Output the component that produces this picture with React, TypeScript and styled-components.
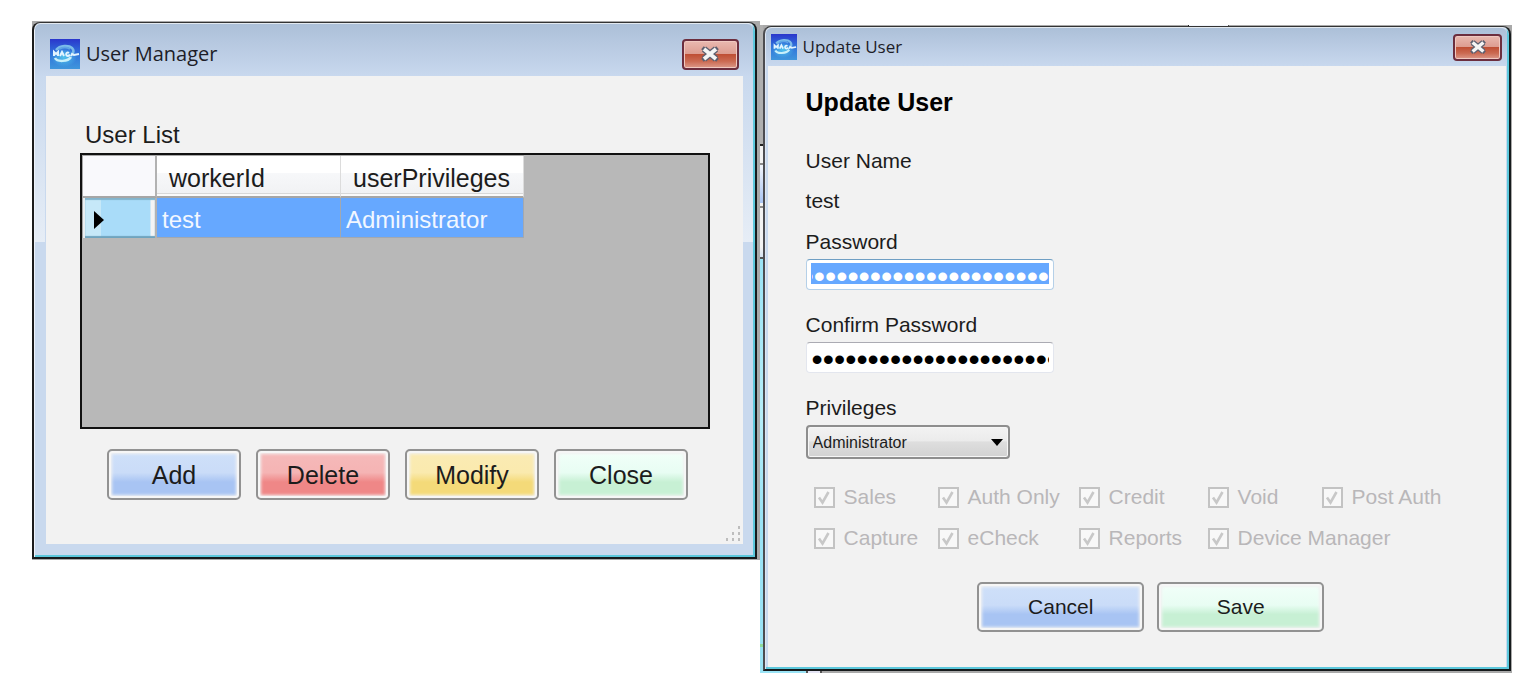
import React, { useEffect, useRef, useState } from 'react';
import styled, { createGlobalStyle, css } from 'styled-components';

const GlobalStyle = createGlobalStyle`
  *, *::before, *::after { box-sizing: border-box; }
  body { margin: 0; background: #fff; color: #1c1c1c; font-family: "Liberation Sans", Arial, sans-serif; }
  button, input, select { font-family: inherit; color: inherit; }
`;

const Desktop = styled.main`
  display: flex;
  align-items: flex-start;
  padding: 21px 24px 19px 32px;
`;

const ManagerBackdrop = styled.div`
  flex: 728 1 0;
  min-width: 0;
  padding: 1px 3px 1px 0;
  background: #a9a9a9;
`;

const EditorBackdrop = styled.div`
  flex: 752 1 0;
  min-width: 0;
  margin-top: 4px;
  padding: 1px 1px 2px 3px;
  background:
    linear-gradient(90deg, #222 1px, #f2f6fc 1px 40px, #555 40px) 428px 0 / 41px 1px no-repeat,
    linear-gradient(90deg, #9ae3f5 46px, #555 46px 48px, #e4e4f4 48px 60px, #555 60px) 0 100% / 62px 2px no-repeat,
    linear-gradient(
      #b0b0b0 119px, #222 119px 121px, #f2f2f2 121px 138px, #8a8a8a 138px 140px,
      #eef2fa 140px 142px, #a9c4f2 178px, #f2f2f2 178px 181px, #8a8a8a 181px 183px,
      #f2f2f2 183px 222px, #d5e2f0 232px, #555 232px 234px, #9ae3f5 234px, #b5edf8 390px,
      #9ae3f5 490px, #9ae3f5 619px, #8fdc9c 619px 622px, #9ae3f5 622px
    ) 0 0 / 3px 100% no-repeat,
    #a9a9a9;
`;

const Frame = styled.section<{ $wide?: boolean }>`
  display: flex;
  flex-direction: column;
  border: 2px solid #161a1c;
  border-top: 1px solid #333;
  border-left-color: ${p => (p.$wide ? '#1c1c1c' : '#4c4c50')};
  border-radius: 8px 8px 0 0;
  background: #c9d9ee;
  box-shadow:
    inset 0 1px 0 #e2e9f0,
    inset 1px 0 0 ${p => (p.$wide ? '#eef3fa' : '#dde6f4')},
    inset -2px -2px 0 #5cc8dc;
`;

const TitleBar = styled.header<{ $wide?: boolean }>`
  display: flex;
  align-items: center;
  gap: 6px;
  height: ${p => (p.$wide ? 52 : 38)}px;
  margin: 1px 2px 0 1px;
  padding: ${p => (p.$wide ? '8px 14px 0 15px' : '0 5px 0 5px')};
  border-radius: 6px 6px 0 0;
  background: linear-gradient(#acc0d8, #b6c8e0 35%, #c8d8ee);
`;

const TitleText = styled.h1<{ $wide?: boolean }>`
  flex: 1;
  margin: 0;
  font: 400 ${p => (p.$wide ? 20 : 17)}px/24px "Open Sans", "Noto Sans", sans-serif;
  color: #1d1d28;
`;

const CloseButton = styled.button<{ $wide?: boolean }>`
  display: flex;
  align-items: center;
  justify-content: center;
  width: ${p => (p.$wide ? 57 : 49)}px;
  height: ${p => (p.$wide ? 31 : 27)}px;
  padding: 0;
  border: 2px solid #6c2e3e;
  border-radius: 4px;
  background: linear-gradient(#e9b9b0, #dd9c90 48%, #bf4f35 50%, #cb6a52 75%, #dc998a);
  box-shadow: inset 0 0 0 1px #f0c8c0;
`;

const Client = styled.div`
  background: #f2f2f2;
`;

const ManagerSides = styled.div`
  padding: 0 12px 13px;
  background:
    linear-gradient(#c9d9ee, #e6edf6) 1px 0 / 10px 166px no-repeat,
    linear-gradient(#c9d9ee, #e6edf6) calc(100% - 2px) 0 / 10px 166px no-repeat;
`;

const EditorSides = styled.div`
  padding: 0 3px 2px;
`;

const GridLabel = styled.h2`
  margin: 0;
  padding: 45px 39px 4px;
  font-size: 24px;
  font-weight: 400;
  line-height: 28px;
`;

const DataGrid = styled.div`
  height: 276px;
  margin: 0 33px 0 34px;
  border: 2px solid #111;
  background: #b8b8b8;
  overflow: hidden;
`;

const Table = styled.table`
  table-layout: fixed;
  width: 442px;
  border-collapse: separate;
  border-spacing: 0;
  border-left: 1px solid #a8a8a8;
  border-top: 1px solid #a8a8a8;
  font-size: 24px;
  line-height: 28px;
  text-align: left;
`;

const HeadCell = styled.th`
  height: 42px;
  padding: 4px 0 0 12px;
  border-right: 1px solid #dcdcdc;
  border-bottom: 2px solid #a6a6a6;
  background: linear-gradient(#fff 42%, #f7f8fa 43%, #f1f2f4 92%, #d8d8d8 93% 95%, #fafafa 96%);
  font-size: 25px;
  font-weight: 400;
`;

const CornerCell = styled.td`
  border-right: 2px solid #b2b2b2;
  border-bottom: 2px solid #a6a6a6;
  background: #f9f9fc;
`;

const RowHeader = styled.td`
  height: 40px;
  padding: 4px 0 0 9px;
  border-right: 2px solid #b2b2b2;
  border-left: 2px solid #e8eef2;
  background: linear-gradient(90deg, #c6e8f8 16px, #a9dcf9 16px 65px, #f4f4f4 66px);
  box-shadow: inset 0 2px 1px #82b4cc, inset 0 -2px 1px #6fa4be;
  svg { display: block; }
`;

const DataCell = styled.td`
  padding: 4px 0 0 5px;
  border-right: 1px solid #a2a8b0;
  border-bottom: 1px solid #a2a8b0;
  background: #66a8ff;
  color: #f2f7ff;
`;

const tones = {
  blue: ['#cfe0f9', '#cadcf8', '#a8c4f3'],
  red: ['#f5baba', '#f5b4b4', '#ef8787'],
  yellow: ['#faebb4', '#faeaae', '#f4da79'],
  green: ['#f2fff9', '#e8fdf3', '#c7f0d4'],
};

const ActionButton = styled.button<{ $tone: keyof typeof tones; $large?: boolean }>`
  width: ${p => (p.$large ? 134 : 167)}px;
  height: ${p => (p.$large ? 51 : 50)}px;
  padding: 0;
  border: 2px solid #929292;
  border-radius: 5px;
  font-size: ${p => (p.$large ? 25 : 21)}px;
  line-height: 28px;
  box-shadow: inset 0 0 0 2px #f6f6f6, inset 0 0 3px 3px #f2f2f2;
  ${p => {
    const [top, mid, low] = tones[p.$tone];
    return css`background: linear-gradient(${top}, ${mid} 46%, ${low} 66%, ${low});`;
  }}
`;

const ManagerActions = styled.div`
  display: flex;
  gap: 15px;
  padding: 20px 0 0 61px;
`;

const GripRow = styled.div`
  display: flex;
  justify-content: flex-end;
  padding: 26px 2px 3px;
  svg { display: block; }
`;

const Form = styled.form`
  padding: 22px 38px 35px;
  font-size: 21px;
  line-height: 24px;
`;

const FormTitle = styled.h2`
  margin: 0 0 33px;
  font-size: 25px;
  line-height: 28px;
  color: #000;
`;

const UserName = styled.dl`
  display: grid;
  gap: 16px;
  margin: 0 0 17px;
  dd { margin: 0; }
`;

const Fields = styled.div`
  display: grid;
  justify-items: start;
  gap: 23px;
`;

const Field = styled.div`
  display: grid;
  justify-items: start;
  gap: 5px;
`;

const PasswordBox = styled.input<{ $selected?: boolean }>`
  width: 248px;
  height: 31px;
  padding: 6px 4px 2px 5px;
  border: 1px solid ${p => (p.$selected ? '#b5d0e8' : '#e3e6ee')};
  border-top-color: ${p => (p.$selected ? '#6f9fc4' : '#ababb3')};
  border-radius: 4px;
  outline: none;
  font-size: 32px;
  line-height: 21px;
  color: ${p => (p.$selected ? '#fff' : '#000')};
  background: ${p =>
    p.$selected
      ? 'linear-gradient(#66a8ff, #66a8ff) 4px 3px / calc(100% - 8px) 21px no-repeat, #fff'
      : '#fff'};
`;

const SelectWrap = styled.div`
  display: grid;
  align-items: center;
  > * { grid-area: 1 / 1; }
  svg { justify-self: end; margin-right: 7px; pointer-events: none; }
`;

const Select = styled.select`
  appearance: none;
  width: 204px;
  height: 34px;
  padding: 0 24px 0 5px;
  border: 2px solid #8e8e8e;
  border-radius: 4px;
  background: linear-gradient(#f2f2f2, #ebebeb 46%, #dedede 50%, #d2d2d2);
  box-shadow: inset 0 0 0 1px #f6f6f6;
  font-size: 16px;
`;

const Permissions = styled.fieldset`
  display: grid;
  grid-template-columns: 124px 141px 129px 114px auto;
  row-gap: 17px;
  margin: 26px 0 0;
  padding: 0 0 0 8px;
  border: 0;
  min-width: 0;
`;

const Permission = styled.label<{ $span?: number }>`
  grid-column: span ${p => p.$span ?? 1};
  display: flex;
  align-items: center;
  gap: 9px;
  color: #b9b7b9;
  white-space: nowrap;
`;

const TickBox = styled.span`
  display: grid;
  place-items: center;
  > * { grid-area: 1 / 1; }
  input {
    appearance: none;
    width: 21px;
    height: 21px;
    margin: 0;
    border: 2px solid #c3c3c3;
    background: #f8f8f8;
  }
`;

const FormActions = styled.div`
  display: flex;
  justify-content: center;
  gap: 13px;
  margin-top: 32px;
  padding-left: 28px;
`;

function AppIcon({ size }: { size: number }) {
  return (
    <svg width={size} height={size} viewBox="0 0 30 30" aria-hidden="true">
      <defs>
        <linearGradient id="tile" x1="0" y1="0" x2="0" y2="1">
          <stop offset="0" stopColor="#2a36cc" />
          <stop offset="0.45" stopColor="#2f70da" />
          <stop offset="1" stopColor="#3f96dc" />
        </linearGradient>
        <radialGradient id="glow">
          <stop offset="0" stopColor="#50c4ec" />
          <stop offset="1" stopColor="#50c4ec" stopOpacity="0" />
        </radialGradient>
      </defs>
      <rect width="30" height="30" fill="url(#tile)" />
      <ellipse cx="14" cy="18" rx="13" ry="10" fill="url(#glow)" />
      <path d="M6 11C10 6 19 6 22 9c2 2 2 4 0 6" fill="none" stroke="#7cbcea" strokeWidth="2.500" />
      <path d="M9 10c4-2 8-2 11 0" fill="none" stroke="#5fa6e6" strokeWidth="2" />
      <path d="M4 17v-4l2 2 2-2v4m2 0 2-4 2 4m5-3c-3-2-4 3-1 3l2-1m1 1 1-2 2 1 5-1" fill="none" stroke="#e2f4ff" strokeWidth="2" />
      <path d="M5 19c2 4 13 4 16-1" fill="none" stroke="#c8f0fa" strokeWidth="2.500" />
    </svg>
  );
}

function CrossIcon({ size }: { size: number }) {
  const d = 'M4 3 16 13M16 3 4 13';
  return (
    <svg width={size} height={size} viewBox="0 -2 20 20" aria-hidden="true" fill="none">
      <path d={d} stroke="#5e6070" strokeWidth="6.500" />
      <path d={d} stroke="#5e6070" strokeWidth="4" strokeLinecap="square" />
      <path d={d} stroke="#f4f4f4" strokeWidth="3.800" />
    </svg>
  );
}

function Tick() {
  return (
    <svg width="15" height="15" viewBox="0 0 15 15" aria-hidden="true">
      <path d="M2 7.500 5.500 12.500 11.500 2" fill="none" stroke="#c8c8c8" strokeWidth="2.600" />
    </svg>
  );
}

function Titled({ text, wide }: { text: string; wide?: boolean }) {
  return (
    <TitleBar $wide={wide}>
      <AppIcon size={wide ? 30 : 26} />
      <TitleText $wide={wide}>{text}</TitleText>
      <CloseButton $wide={wide} type="button" aria-label={`Close ${text}`}>
        <CrossIcon size={wide ? 20 : 18} />
      </CloseButton>
    </TitleBar>
  );
}

function UserManager() {
  return (
    <ManagerBackdrop>
      <Frame $wide>
        <Titled text="User Manager" wide />
        <ManagerSides>
          <Client>
            <GridLabel id="user-list">User List</GridLabel>
            <DataGrid>
              <Table aria-labelledby="user-list">
                <colgroup>
                  <col style={{ width: 74 }} />
                  <col style={{ width: 184 }} />
                  <col style={{ width: 183 }} />
                </colgroup>
                <thead>
                  <tr>
                    <CornerCell />
                    <HeadCell scope="col">workerId</HeadCell>
                    <HeadCell scope="col">userPrivileges</HeadCell>
                  </tr>
                </thead>
                <tbody>
                  <tr>
                    <RowHeader>
                      <svg width="10" height="18" viewBox="0 0 10 18" aria-hidden="true">
                        <path d="M0 0 10 9 0 18z" fill="#000" />
                      </svg>
                    </RowHeader>
                    <DataCell>test</DataCell>
                    <DataCell>Administrator</DataCell>
                  </tr>
                </tbody>
              </Table>
            </DataGrid>
            <ManagerActions>
              <ActionButton type="button" $large $tone="blue">Add</ActionButton>
              <ActionButton type="button" $large $tone="red">Delete</ActionButton>
              <ActionButton type="button" $large $tone="yellow">Modify</ActionButton>
              <ActionButton type="button" $large $tone="green">Close</ActionButton>
            </ManagerActions>
            <GripRow>
              <svg width="15" height="15" viewBox="0 0 15 15" aria-hidden="true" fill="#bdbdbd">
                {[[12, 0], [6, 6], [12, 6], [0, 12], [6, 12], [12, 12]].map(([x, y]) => (
                  <rect key={`${x}-${y}`} x={x} y={y} width="2" height="3" />
                ))}
              </svg>
            </GripRow>
          </Client>
        </ManagerSides>
      </Frame>
    </ManagerBackdrop>
  );
}

const permissions: { name: string; span?: number }[] = [
  { name: 'Sales' },
  { name: 'Auth Only' },
  { name: 'Credit' },
  { name: 'Void' },
  { name: 'Post Auth' },
  { name: 'Capture' },
  { name: 'eCheck' },
  { name: 'Reports' },
  { name: 'Device Manager', span: 2 },
];

function UpdateUser() {
  const passwordRef = useRef<HTMLInputElement>(null);
  const [password, setPassword] = useState('x'.repeat(22));
  const [confirm, setConfirm] = useState('x'.repeat(22));

  // Keep the end of the password in view.
  useEffect(() => {
    const box = passwordRef.current;
    if (box) box.scrollLeft = box.scrollWidth;
  }, []);

  return (
    <EditorBackdrop>
      <Frame>
        <Titled text="Update User" />
        <EditorSides>
          <Client>
            <Form onSubmit={e => e.preventDefault()}>
              <FormTitle>Update User</FormTitle>
              <UserName>
                <dt>User Name</dt>
                <dd>test</dd>
              </UserName>
              <Fields>
                <Field>
                  <label htmlFor="password">Password</label>
                  <PasswordBox
                    id="password"
                    ref={passwordRef}
                    type="password"
                    $selected
                    value={password}
                    onChange={e => setPassword(e.target.value)}
                  />
                </Field>
                <Field>
                  <label htmlFor="confirm">Confirm Password</label>
                  <PasswordBox
                    id="confirm"
                    type="password"
                    value={confirm}
                    onChange={e => setConfirm(e.target.value)}
                  />
                </Field>
                <Field>
                  <label htmlFor="privileges">Privileges</label>
                  <SelectWrap>
                    <Select id="privileges" defaultValue="Administrator">
                      <option>Administrator</option>
                    </Select>
                    <svg width="12" height="7" viewBox="0 0 12 7" aria-hidden="true">
                      <path d="M0 0h12L6 7z" fill="#000" />
                    </svg>
                  </SelectWrap>
                </Field>
              </Fields>
              <Permissions disabled aria-label="Permissions">
                {permissions.map(p => (
                  <Permission key={p.name} $span={p.span}>
                    <TickBox>
                      <input type="checkbox" defaultChecked />
                      <Tick />
                    </TickBox>
                    {p.name}
                  </Permission>
                ))}
              </Permissions>
              <FormActions>
                <ActionButton type="button" $tone="blue">Cancel</ActionButton>
                <ActionButton type="submit" $tone="green">Save</ActionButton>
              </FormActions>
            </Form>
          </Client>
        </EditorSides>
      </Frame>
    </EditorBackdrop>
  );
}

export default function App() {
  return (
    <>
      <GlobalStyle />
      <Desktop>
        <UserManager />
        <UpdateUser />
      </Desktop>
    </>
  );
}
